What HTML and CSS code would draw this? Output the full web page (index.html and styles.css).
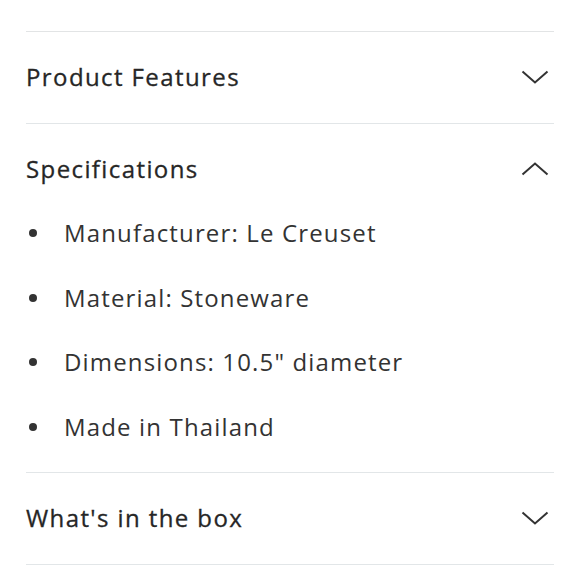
FILE: index.html
```html
<!DOCTYPE html>
<html>
<head>
<meta charset="utf-8">
<link rel="stylesheet" href="styles.css">
</head>
<body>
<div class="accordion">
  <section class="panel">
    <div class="head">
      <h2 class="title">Product Features</h2>
      <svg class="chev" width="28" height="14" viewBox="0 0 28 14"><path d="M1.5 1.5 L14 12.5 L26.5 1.5" fill="none" stroke="#333" stroke-width="2"/></svg>
    </div>
  </section>
  <section class="panel">
    <div class="head">
      <h2 class="title">Specifications</h2>
      <svg class="chev" width="28" height="14" viewBox="0 0 28 14"><path d="M1.5 12.5 L14 1.5 L26.5 12.5" fill="none" stroke="#333" stroke-width="2"/></svg>
    </div>
    <ul class="specs">
      <li>Manufacturer: Le Creuset</li>
      <li>Material: Stoneware</li>
      <li>Dimensions: 10.5" diameter</li>
      <li>Made in Thailand</li>
    </ul>
  </section>
  <section class="panel">
    <div class="head">
      <h2 class="title">What's in the box</h2>
      <svg class="chev" width="28" height="14" viewBox="0 0 28 14"><path d="M1.5 1.5 L14 12.5 L26.5 1.5" fill="none" stroke="#333" stroke-width="2"/></svg>
    </div>
  </section>
</div>
</body>
</html>
```
FILE: styles.css
```css
html, body {
  margin: 0;
  padding: 0;
  background: #fff;
}
body {
  font-family: "Open Sans", "Liberation Sans", sans-serif;
  color: #2e2e2e;
}
.accordion {
  margin: 31px 26px 0 26px;
  border-top: 1px solid #e2e4e5;
}
.panel {
  border-bottom: 1px solid #e2e6e8;
}
.head {
  height: 91px;
  display: flex;
  align-items: center;
  justify-content: space-between;
  padding-bottom: 1px;
  box-sizing: border-box;
}
.title {
  margin: 0;
  font-size: 24px;
  line-height: 30px;
  font-weight: 500;
  letter-spacing: 1.4px;
  color: #262626;
  -webkit-text-stroke: 0.3px #262626;
}
.chev {
  margin-right: 5px;
  display: block;
}
.specs {
  margin: 0;
  padding: 0 0 27px 0;
  list-style: none;
  display: flex;
  flex-direction: column;
  gap: 28.5px;
}
.specs li {
  position: relative;
  height: 36px;
  line-height: 35px;
  padding-left: 38px;
  font-size: 24px;
  letter-spacing: 1.15px;
  color: #333;
}
.specs li::before {
  content: "";
  position: absolute;
  left: 3px;
  top: 14px;
  width: 8px;
  height: 8px;
  border-radius: 50%;
  background: #333;
}
```
